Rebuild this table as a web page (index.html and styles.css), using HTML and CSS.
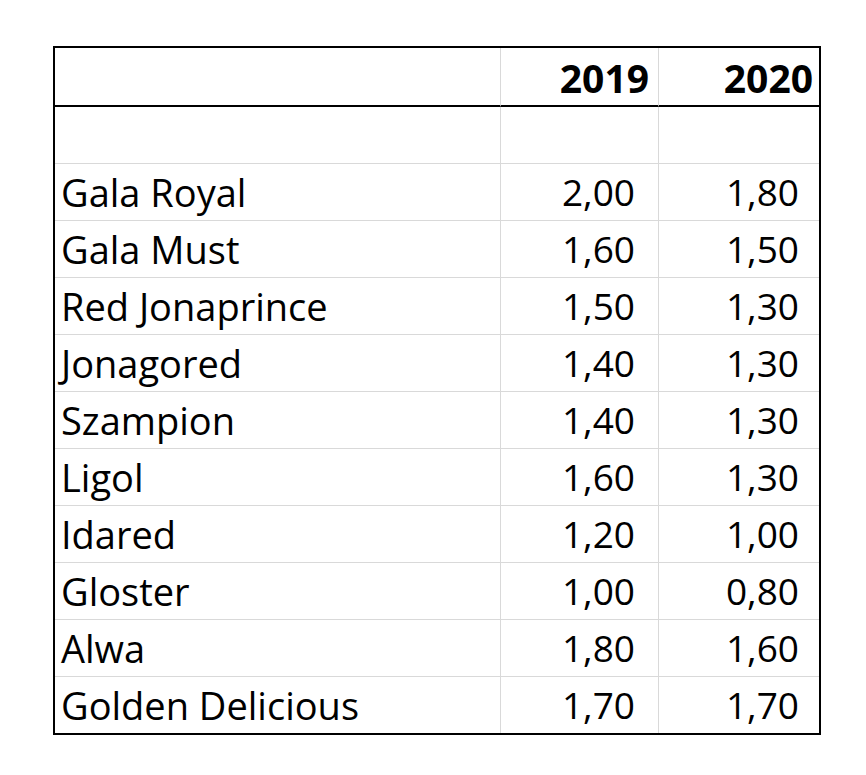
FILE: index.html
```html
<!DOCTYPE html>
<html>
<head>
<meta charset="utf-8">
<link rel="stylesheet" href="styles.css">
</head>
<body>
<div class="sheet">
  <div class="grid">
    <div class="cell head name"></div>
    <div class="cell head num">2019</div>
    <div class="cell head num last">2020</div>

    <div class="cell name"></div>
    <div class="cell num"></div>
    <div class="cell num last"></div>

    <div class="cell name">Gala Royal</div>
    <div class="cell num">2,00</div>
    <div class="cell num last">1,80</div>

    <div class="cell name">Gala Must</div>
    <div class="cell num">1,60</div>
    <div class="cell num last">1,50</div>

    <div class="cell name">Red Jonaprince</div>
    <div class="cell num">1,50</div>
    <div class="cell num last">1,30</div>

    <div class="cell name">Jonagored</div>
    <div class="cell num">1,40</div>
    <div class="cell num last">1,30</div>

    <div class="cell name">Szampion</div>
    <div class="cell num">1,40</div>
    <div class="cell num last">1,30</div>

    <div class="cell name">Ligol</div>
    <div class="cell num">1,60</div>
    <div class="cell num last">1,30</div>

    <div class="cell name">Idared</div>
    <div class="cell num">1,20</div>
    <div class="cell num last">1,00</div>

    <div class="cell name">Gloster</div>
    <div class="cell num">1,00</div>
    <div class="cell num last">0,80</div>

    <div class="cell name">Alwa</div>
    <div class="cell num">1,80</div>
    <div class="cell num last">1,60</div>

    <div class="cell name bottom">Golden Delicious</div>
    <div class="cell num bottom">1,70</div>
    <div class="cell num last bottom">1,70</div>
  </div>
</div>
</body>
</html>
```

FILE: styles.css
```css
html, body {
  margin: 0;
  padding: 0;
  background: #ffffff;
}

.sheet {
  padding: 46px 0 0 53px;
}

.grid {
  display: grid;
  grid-template-columns: 446px 158px 160px;
  width: 764px;
  border: 2px solid #000;
  font-family: "Open Sans", "Liberation Sans", sans-serif;
  font-size: 38px;
  color: #000;
}

.cell {
  height: 56px;
  line-height: 56px;
  border-bottom: 1px solid #d9d9d9;
  border-right: 1px solid #d9d9d9;
  white-space: nowrap;
  overflow: hidden;
}

.cell.last {
  border-right: none;
}

.cell.bottom {
  border-bottom: none;
}

.cell.head {
  height: 57px;
  line-height: 60px;
  border-bottom: 2px solid #000;
  font-weight: 700;
  font-size: 39px;
  letter-spacing: 0;
}

.name {
  padding-left: 6px;
  text-align: left;
}

.num {
  text-align: right;
  padding-right: 23px;
  font-size: 37px;
  letter-spacing: 0;
}

.num.last {
  padding-right: 20px;
}

.head.num {
  padding-right: 9px;
}

.head.num.last {
  padding-right: 6px;
}
```
